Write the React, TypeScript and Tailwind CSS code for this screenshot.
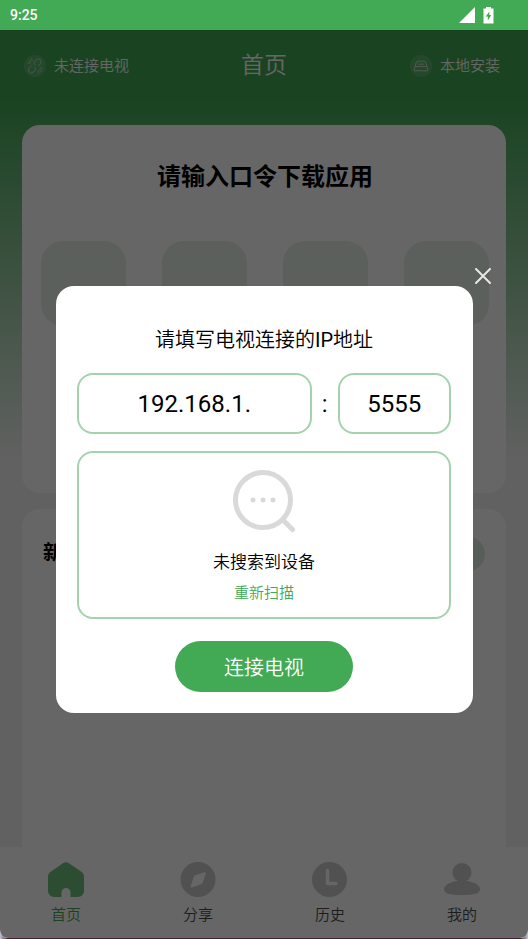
import type { ReactNode } from "react";

const codeSlots = [0, 1, 2, 3];

const tabs = [
  { label: "首页", icon: <HomeIcon />, active: true },
  { label: "分享", icon: <CompassIcon />, active: false },
  { label: "历史", icon: <ClockIcon />, active: false },
  { label: "我的", icon: <UserIcon />, active: false },
];

export default function App() {
  return (
    <div className="flex h-screen min-h-[760px] flex-col bg-[#42a955] font-['Roboto','Noto_Sans_CJK_SC',sans-serif] font-[350] text-black">
      <StatusBar />
      <div className="flex min-h-0 flex-1 bg-[linear-gradient(90deg,#c3c6d8,#4f1a30_8px,#4f1a30_calc(100%-8px),#c3c6d8)] pb-px">
        <div className="relative flex min-h-0 flex-1 flex-col overflow-hidden rounded-b-lg bg-[#f2f2f2]">
          <HomePage />
          <TabBar />
          <ConnectDialog />
        </div>
      </div>
    </div>
  );
}

function StatusBar() {
  return (
    <div className="flex h-[30px] shrink-0 items-center justify-between pr-[34px] pl-[10px] text-white">
      <span className="text-sm font-medium">9:25</span>
      <div className="flex items-center gap-2">
        <svg width="16" height="16" viewBox="0 0 16 16" fill="currentColor">
          <path d="M16 0v16H0z" />
        </svg>
        <svg width="11" height="18" viewBox="0 0 11 18">
          <path d="M3 1h5v1.500h2.500V17.500H.5V2.500H3z" fill="currentColor" />
          <path d="M6.300 5.500L2.800 10.500h2v4l3.500-5.500h-2z" fill="#42a955" />
        </svg>
      </div>
    </div>
  );
}

function HomePage() {
  return (
    <div className="flex min-h-0 flex-1 flex-col overflow-hidden bg-[linear-gradient(180deg,#42a955_70px,#f2f2f2_430px)]">
      <header className="grid h-[70px] shrink-0 grid-cols-[1fr_auto_1fr] items-center px-6 pt-0.5 text-[15px] text-white">
        <button className="flex items-center gap-2">
          <HeaderBadge>
            <BrokenLinkIcon />
          </HeaderBadge>
          未连接电视
        </button>
        <h1 className="text-[23px]">首页</h1>
        <button className="flex items-center gap-2 justify-self-end pr-1">
          <HeaderBadge>
            <DiskIcon />
          </HeaderBadge>
          本地安装
        </button>
      </header>

      <main className="flex min-h-0 flex-1 flex-col gap-4 px-[22px] pt-[25px]">
        <section className="h-[368px] shrink-0 rounded-[18px] bg-white pt-[34px] pr-[17px] pl-[19px]">
          <h2 className="text-center text-2xl leading-9 font-bold">请输入口令下载应用</h2>
          <div className="mt-[46px] flex justify-between">
            {codeSlots.map((slot) => (
              <div key={slot} className="size-[85px] rounded-[22px] bg-[#e5efe7]" />
            ))}
          </div>
        </section>
        <section className="flex flex-1 items-start justify-between rounded-t-[18px] bg-white px-[21px] pt-7">
          <h2 className="text-xl leading-8 font-bold">新品推荐</h2>
          <div className="h-[34px] w-20 rounded-full bg-[#d9eadc]" />
        </section>
      </main>
    </div>
  );
}

function HeaderBadge({ children }: { children: ReactNode }) {
  return (
    <span className="flex size-[22px] items-center justify-center rounded-full bg-white/15">
      {children}
    </span>
  );
}

function TabBar() {
  return (
    <nav className="grid h-[91px] shrink-0 grid-cols-4 bg-white pt-[14px]">
      {tabs.map((tab) => (
        <a
          key={tab.label}
          href="#"
          className={`flex flex-col items-center gap-1 text-[15px] leading-6 ${
            tab.active ? "text-[#42a955]" : "text-[#4a4a4a]"
          }`}
        >
          {tab.icon}
          {tab.label}
        </a>
      ))}
    </nav>
  );
}

function ConnectDialog() {
  return (
    <div className="absolute inset-0 flex items-center bg-black/60 pr-[37px] pl-[38px]">
      <div className="flex flex-1 flex-col">
        <button aria-label="关闭" className="flex h-[31px] items-center self-end pt-[10px] text-[#e6e6e6]">
          <svg width="16" height="16" viewBox="0 0 16 16" stroke="currentColor" strokeWidth="2" strokeLinecap="round">
            <path d="M1 1l14 14M15 1L1 15" />
          </svg>
        </button>
        <div
          role="dialog"
          aria-labelledby="dialog-title"
          className="mx-[18px] flex flex-col rounded-[18px] bg-white pt-[38px] pr-[22px] pb-[21px] pl-[21px]"
        >
          <h2 id="dialog-title" className="text-center text-xl leading-8">
            请填写电视连接的<span className="font-normal">IP</span>地址
          </h2>
          <div className="mt-[17px] flex items-center text-2xl font-normal">
            <input
              aria-label="IP地址"
              defaultValue="192.168.1."
              className="h-[61px] w-0 flex-[236] rounded-[16px] border-2 border-[#a5d2ae] text-center outline-none"
            />
            <span className="w-[26px] text-center">:</span>
            <input
              aria-label="端口"
              defaultValue="5555"
              className="h-[61px] w-0 flex-[112] rounded-[16px] border-2 border-[#a5d2ae] text-center outline-none"
            />
          </div>
          <div className="mt-[17px] flex h-[168px] flex-col items-center rounded-[16px] border-2 border-[#a5d2ae] pt-4">
            <SearchIcon />
            <p className="mt-[15px] text-[17px] leading-7">未搜索到设备</p>
            <button className="mt-[3px] text-[15px] leading-7 text-[#42a955]">重新扫描</button>
          </div>
          <button className="mt-[22px] h-[51px] w-[178px] self-center rounded-full bg-[#42a955] pt-0.5 text-xl text-white">
            连接电视
          </button>
        </div>
      </div>
    </div>
  );
}

function SearchIcon() {
  return (
    <svg width="64" height="64" viewBox="0 0 64 64" fill="none" className="shrink-0">
      <circle cx="31" cy="31" r="27.500" stroke="#d9d9d9" strokeWidth="5" />
      <path d="M51 51l9.500 9.500" stroke="#d9d9d9" strokeWidth="5" strokeLinecap="round" />
      <g fill="#d9d9d9">
        <circle cx="21" cy="31" r="2.500" />
        <circle cx="31" cy="31" r="2.500" />
        <circle cx="41" cy="31" r="2.500" />
      </g>
    </svg>
  );
}

function BrokenLinkIcon() {
  return (
    <svg
      width="16"
      height="16"
      viewBox="0 0 16 16"
      fill="none"
      stroke="currentColor"
      strokeOpacity="0.5"
      strokeLinecap="round"
      strokeLinejoin="round"
    >
      <path d="M8 6.800C6.800 5.500 7 4.300 8 3.300l1.300-1.400a2.800 2.800 0 0 1 4 4l-2 2.100" />
      <path d="M4.800 7.500l-2.500 2.600a2.800 2.800 0 0 0 4 4l1.500-1.500c1-1 1-2.300-.2-3.400" />
      <path d="M4.500.8l.8 2M2 2.400l1.800 1.500M.8 5l2 .3M11 13l.6 1.800M12.400 11.700l1.800 1.500M13 10l2.200.4" />
    </svg>
  );
}

function DiskIcon() {
  return (
    <svg
      width="16"
      height="12"
      viewBox="0 0 16 12"
      fill="none"
      stroke="currentColor"
      strokeOpacity="0.6"
      strokeLinejoin="round"
    >
      <path d="M2.200 6.500l1.200-4.200a1.500 1.500 0 0 1 1.400-1.100h6.400a1.500 1.500 0 0 1 1.400 1.100l1.200 4.200" />
      <path d="M2.200 6.500h11.600l1 3a1 1 0 0 1-1 1.300H2.200a1 1 0 0 1-1-1.300zM5 4.200h6" />
    </svg>
  );
}

function HomeIcon() {
  return (
    <svg width="38" height="38" viewBox="0 0 38 38" fill="#70c07e">
      <path d="M16 2.200a5.500 5.500 0 0 1 6 0l12 8.300a6 6 0 0 1 3 5.200V30a6 6 0 0 1-6 6h-7.500v-4.500a4.500 4.500 0 0 0-9 0V36H7a6 6 0 0 1-6-6V15.700a6 6 0 0 1 3-5.200z" />
    </svg>
  );
}

function CompassIcon() {
  return (
    <svg width="38" height="38" viewBox="0 0 38 38">
      <circle cx="19" cy="18.500" r="17.500" fill="#cacaca" />
      <path d="M25.500 11.300q1.800-.5 1.300 1.300l-3 8.900a2.500 2.500 0 0 1-1.500 1.500l-9.300 3.500q-1.800.5-1.300-1.300l3-9.400a2.500 2.500 0 0 1 1.500-1.500z" fill="#fff" />
    </svg>
  );
}

function ClockIcon() {
  return (
    <svg width="38" height="38" viewBox="0 0 38 38" fill="none">
      <circle cx="18.500" cy="18.500" r="17.500" fill="#cacaca" />
      <path d="M16.500 9.500v13H25" stroke="#fff" strokeWidth="3.500" strokeLinecap="round" strokeLinejoin="round" />
    </svg>
  );
}

function UserIcon() {
  return (
    <svg width="38" height="38" viewBox="0 0 38 38" fill="#cacaca">
      <circle cx="19" cy="11.500" r="9.500" />
      <path d="M19 19.500c10 0 18 4.500 18 8.500 0 4.500-5 6-18 6S1 32.500 1 28c0-4 8-8.500 18-8.500z" />
    </svg>
  );
}
